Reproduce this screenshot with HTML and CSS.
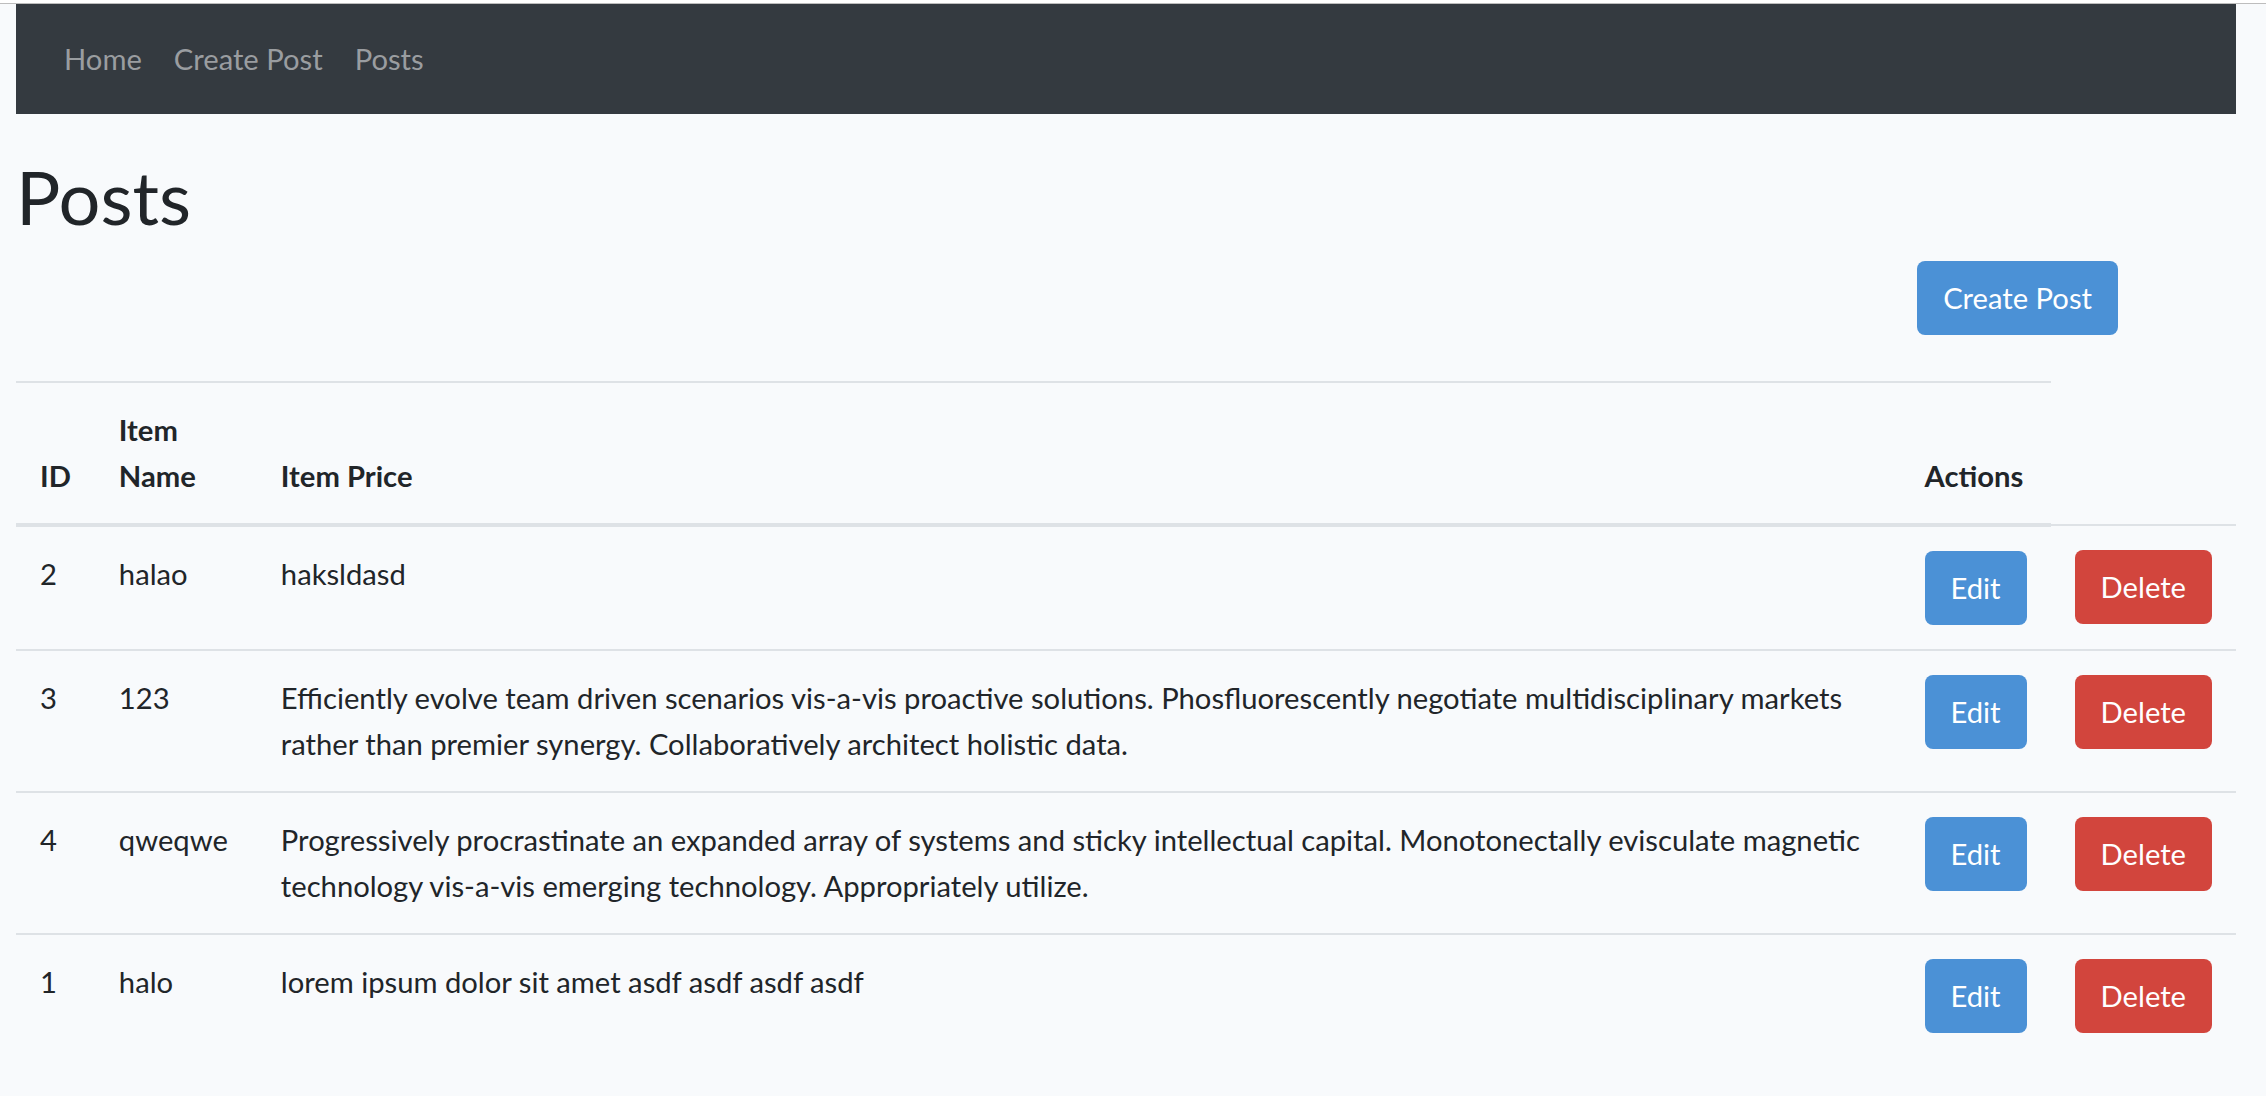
FILE: index.html
```html
<!DOCTYPE html>
<html lang="en">
<head>
<meta charset="utf-8">
<title>Posts</title>
<link rel="stylesheet" href="styles.css">
</head>
<body>
<div class="topline"></div>
<nav class="navbar">
  <ul class="nav">
    <li><a class="nav-link" href="#">Home</a></li>
    <li><a class="nav-link" href="#">Create Post</a></li>
    <li><a class="nav-link" href="#">Posts</a></li>
  </ul>
</nav>
<main class="content">
  <h1 class="title">Posts</h1>
  <div class="toolbar"><a class="btn btn-primary" href="#">Create Post</a></div>
  <table class="table">
    <thead>
      <tr>
        <th class="c-id">ID</th>
        <th class="c-name">Item Name</th>
        <th class="c-price">Item Price</th>
        <th class="c-act">Actions</th>
      </tr>
    </thead>
    <tbody>
      <tr>
        <td>2</td>
        <td>halao</td>
        <td>haksldasd</td>
        <td><a class="btn btn-primary" href="#">Edit</a></td>
        <td class="c-del"><button class="btn btn-danger" type="button">Delete</button></td>
      </tr>
      <tr>
        <td>3</td>
        <td>123</td>
        <td>Efficiently evolve team driven scenarios vis-a-vis proactive solutions. Phosfluorescently negotiate multidisciplinary markets rather than premier synergy. Collaboratively architect holistic data.</td>
        <td><a class="btn btn-primary" href="#">Edit</a></td>
        <td class="c-del"><button class="btn btn-danger" type="button">Delete</button></td>
      </tr>
      <tr>
        <td>4</td>
        <td>qweqwe</td>
        <td>Progressively procrastinate an expanded array of systems and sticky intellectual capital. Monotonectally evisculate magnetic technology vis-a-vis emerging technology. Appropriately utilize.</td>
        <td><a class="btn btn-primary" href="#">Edit</a></td>
        <td class="c-del"><button class="btn btn-danger" type="button">Delete</button></td>
      </tr>
      <tr>
        <td>1</td>
        <td>halo</td>
        <td>lorem ipsum dolor sit amet asdf asdf asdf asdf</td>
        <td><a class="btn btn-primary" href="#">Edit</a></td>
        <td class="c-del"><button class="btn btn-danger" type="button">Delete</button></td>
      </tr>
    </tbody>
  </table>
</main>
</body>
</html>
```
FILE: styles.css
```css
html, body {
  margin: 0;
  padding: 0;
}
body {
  background: #f8fafc;
  color: #212529;
  font-family: Lato, "Open Sans", Arial, sans-serif;
  font-size: 29.2px;
  line-height: 46px;
}
.topline {
  height: 3px;
  background: #ffffff;
  border-bottom: 1px solid #bdbdbd;
}
.navbar {
  margin-left: 16px;
  width: 2220px;
  height: 110px;
  background: #343a40;
  padding: 0 32px;
  box-sizing: border-box;
  display: flex;
  align-items: center;
}
.nav {
  list-style: none;
  margin: 0;
  padding: 0;
  display: flex;
}
.nav-link {
  display: block;
  padding: 0 16px;
  color: #9a9da0;
  text-decoration: none;
}
.content {
  margin-left: 16px;
  width: 2220px;
  padding-top: 40px;
}
.title {
  margin: 0 0 21px;
  font-size: 74px;
  line-height: 86px;
  font-weight: 400;
}
.toolbar {
  display: flex;
  justify-content: flex-end;
  padding-right: 118px;
  margin-bottom: 46px;
}
.btn {
  display: inline-block;
  box-sizing: border-box;
  height: 74px;
  padding: 14px 26px;
  border: 0;
  border-radius: 8px;
  font: inherit;
  line-height: 46px;
  color: #ffffff;
  text-decoration: none;
  cursor: pointer;
}
.btn-primary { background: #4b91d6; }
.btn-danger { background: #d2453d; }
.table {
  width: 2220px;
  border-collapse: collapse;
}
.table th,
.table td {
  padding: 24px;
  text-align: left;
  vertical-align: top;
  border-top: 2px solid #dee2e6;
}
.table thead th {
  vertical-align: bottom;
  font-weight: 700;
  border-bottom: 4px solid #dee2e6;
}
.c-id { width: 30px; }
.c-name { width: 114px; }
.c-act { width: 102px; }
.c-del { width: 136px; }
```
